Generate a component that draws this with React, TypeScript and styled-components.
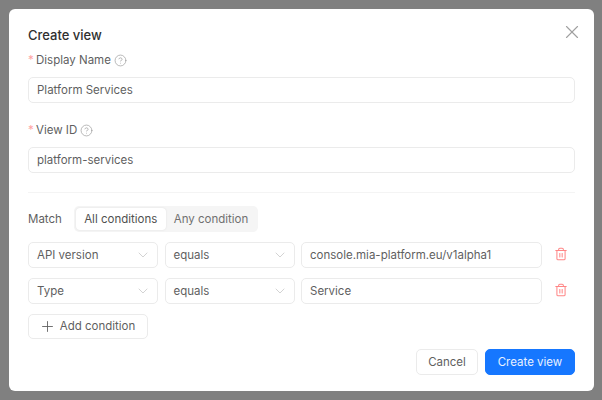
import styled, { createGlobalStyle } from "styled-components";
import { ChevronDown, CircleHelp, Plus, Trash2, X } from "lucide-react";

const Global = createGlobalStyle`
  html, body {
    margin: 0;
    padding: 0;
    height: 100%;
    overflow: hidden;
    background: #808080;
  }
  * {
    box-sizing: border-box;
  }
`;

const Overlay = styled.div`
  width: 602px;
  height: 400px;
  padding: 9px 8px 9px 9px;
  background: #808080;
  font-family: Inter, "Liberation Sans", sans-serif;
  font-size: 11.5px;
  color: #5f5f5f;
`;
const Modal = styled.div`
  position: relative;
  height: 382px;
  padding: 18px 19px 16px;
  background: #fff;
  border-radius: 6px;
  display: flex;
  flex-direction: column;
`;
const Title = styled.div`
  font-size: 13px;
  line-height: 17px;
  font-weight: 500;
  color: #2f2f2f;
`;
const CloseButton = styled.button`
  position: absolute;
  top: 12px;
  right: 11px;
  width: 22px;
  height: 22px;
  padding: 0;
  border: 0;
  background: none;
  color: #a0a0a0;
  display: flex;

  svg {
    width: 22px;
    height: 22px;
  }
`;
const Field = styled.div<{ $top: number }>`
  margin-top: ${(p) => p.$top}px;
  display: flex;
  flex-direction: column;
  gap: 9px;
`;
const Label = styled.div`
  height: 15px;
  display: flex;
  align-items: center;
  gap: 3px;
  line-height: 15px;

  svg {
    width: 13px;
    height: 13px;
    color: #999;
  }
`;
const Star = styled.span`
  color: #ffa5a5;
  width: 5px;
`;
const Input = styled.div<{ $width?: number }>`
  ${(p) => (p.$width ? `width: ${p.$width}px;` : "")}
  height: 26px;
  padding: 0 8px;
  border: 1px solid #ebebeb;
  border-radius: 5px;
  line-height: 24px;
  background: #fff;
  white-space: nowrap;
`;
const Divider = styled.div`
  height: 1px;
  margin-top: 19px;
  background: #f4f4f4;
`;
const MatchRow = styled.div`
  margin-top: 13px;
  display: flex;
  align-items: center;
  gap: 12px;
`;
const Tabs = styled.div`
  width: 184.5px;
  height: 26px;
  padding: 2px;
  background: #f5f5f5;
  border-radius: 5px;
  display: flex;
`;
const Tab = styled.div<{ $active?: boolean }>`
  width: ${(p) => (p.$active ? 90 : 91)}px;
  height: 22px;
  line-height: 22px;
  text-align: center;
  border-radius: 4px;
  background: ${(p) => (p.$active ? "#fff" : "transparent")};
  color: ${(p) => (p.$active ? "#505050" : "#707070")};
  ${(p) => (p.$active ? "box-shadow: 0 0 2px rgba(0, 0, 0, 0.1);" : "")}
`;
const ConditionRow = styled.div<{ $top: number }>`
  margin-top: ${(p) => p.$top}px;
  display: flex;
  align-items: center;
`;
const Select = styled(Input)<{ $width: number }>`
  margin-right: 6.5px;
  display: flex;
  align-items: center;
  justify-content: space-between;

  svg {
    width: 16px;
    height: 16px;
    margin-right: -2px;
    color: #bdbdbd;
  }
`;
const Remove = styled.button`
  margin: -2px 0 0 12px;
  width: 14px;
  height: 14px;
  padding: 0;
  border: 0;
  background: none;
  color: #ff8585;
  display: flex;

  svg {
    width: 14px;
    height: 14px;
  }
`;
const Button = styled.button<{ $primary?: boolean; $width: number }>`
  width: ${(p) => p.$width}px;
  height: 26px;
  padding: 0;
  border: 1px solid ${(p) => (p.$primary ? "#1677ff" : "#ebebeb")};
  border-radius: 5px;
  background: ${(p) => (p.$primary ? "#1677ff" : "#fff")};
  color: ${(p) => (p.$primary ? "#e8f1ff" : "#5f5f5f")};
  font: inherit;
  display: flex;
  align-items: center;
  justify-content: center;
  gap: 4px;

  svg {
    width: 17px;
    height: 17px;
  }
`;
const AddButton = styled(Button)`
  margin-top: 10px;
  padding-right: 2px;
`;
const Footer = styled.div`
  margin-top: 10px;
  display: flex;
  justify-content: flex-end;
  gap: 7px;
`;

const rows = [
  { field: "API version", value: "console.mia-platform.eu/v1alpha1" },
  { field: "Type", value: "Service" },
];

export default function App() {
  return (
    <Overlay>
      <Global />
      <Modal>
        <Title>Create view</Title>
        <CloseButton>
          <X strokeWidth={1.25} />
        </CloseButton>
        <Field $top={8.5}>
          <Label>
            <Star>*</Star>
            Display Name
            <CircleHelp strokeWidth={1.25} />
          </Label>
          <Input>Platform Services</Input>
        </Field>
        <Field $top={20.5}>
          <Label>
            <Star>*</Star>
            View ID
            <CircleHelp strokeWidth={1.25} />
          </Label>
          <Input>platform-services</Input>
        </Field>
        <Divider />
        <MatchRow>
          <span>Match</span>
          <Tabs>
            <Tab $active>All conditions</Tab>
            <Tab>Any condition</Tab>
          </Tabs>
        </MatchRow>
        {rows.map((row) => (
          <ConditionRow key={row.field} $top={10}>
            <Select $width={130}>
              {row.field}
              <ChevronDown strokeWidth={1} />
            </Select>
            <Select $width={130}>
              equals
              <ChevronDown strokeWidth={1} />
            </Select>
            <Input $width={241}>{row.value}</Input>
            <Remove>
              <Trash2 strokeWidth={1.75} />
            </Remove>
          </ConditionRow>
        ))}
        <AddButton $width={120}>
          <Plus strokeWidth={1.25} />
          Add condition
        </AddButton>
        <Footer>
          <Button $width={62}>Cancel</Button>
          <Button $primary $width={90}>
            Create view
          </Button>
        </Footer>
      </Modal>
    </Overlay>
  );
}
